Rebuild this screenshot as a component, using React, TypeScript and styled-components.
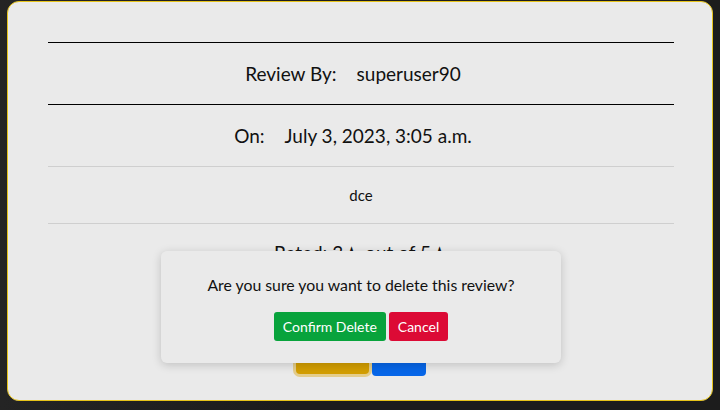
import styled, { createGlobalStyle } from 'styled-components';

const GlobalStyle = createGlobalStyle`
  html, body {
    margin: 0;
    padding: 0;
    background: #1e1e1e;
    font-family: Lato, 'Noto Sans', sans-serif;
  }
`;

const Page = styled.div`
  box-sizing: border-box;
  width: 720px;
  height: 410px;
  padding: 1px 7px 9px 7px;
  background: linear-gradient(90deg, #242424 0%, #1c1c1c 40%, #1c1c1c 100%);
`;

const Card = styled.div`
  position: relative;
  box-sizing: border-box;
  height: 400px;
  padding: 40px 38px 0 40px;
  background: #eaeaea;
  border: 1px solid #e6c31a;
  border-radius: 12px;
  display: flex;
  flex-direction: column;
  color: #111;
  overflow: hidden;
`;

const Divider = styled.div<{ $strong?: boolean }>`
  height: 1px;
  flex-shrink: 0;
  background: ${({ $strong }) => ($strong ? '#000' : '#cfcfcf')};
`;

const Row = styled.div<{ $height: number; $size: number; $offset?: number }>`
  box-sizing: border-box;
  height: ${({ $height }) => $height}px;
  flex-shrink: 0;
  display: flex;
  align-items: center;
  justify-content: center;
  gap: 20px;
  padding-right: ${({ $offset }) => $offset ?? 0}px;
  font-size: ${({ $size }) => $size}px;
`;

const Actions = styled.div`
  margin-top: 56px;
  flex-shrink: 0;
  display: flex;
  align-items: flex-start;
  justify-content: center;
  gap: 3px;
`;

const SmallButton = styled.button<{
  $bg: string;
  $width: number;
  $focused?: boolean;
}>`
  width: ${({ $width }) => $width}px;
  height: ${({ $focused }) => ($focused ? 38 : 40)}px;
  border: none;
  border-radius: 4px;
  background: ${({ $bg }) => $bg};
  color: #fff;
  font-family: inherit;
  font-size: 14px;
  box-shadow: ${({ $focused }) =>
    $focused ? '0 0 0 3px rgba(222, 180, 60, 0.55)' : 'none'};
`;

const Modal = styled.div`
  position: absolute;
  left: 153px;
  top: 249px;
  width: 400px;
  height: 112px;
  box-sizing: border-box;
  background: #eaeaea;
  border-radius: 6px;
  box-shadow: 0 2px 10px rgba(0, 0, 0, 0.18);
  display: flex;
  flex-direction: column;
  align-items: center;
  padding-top: 24px;
`;

const Question = styled.p`
  margin: 0;
  font-size: 15.8px;
  line-height: 20px;
  color: #111;
`;

const ModalButtons = styled.div`
  margin-top: 17px;
  display: flex;
  gap: 3px;
`;

const ModalButton = styled.button<{ $bg: string }>`
  height: 29px;
  padding: 0 9px;
  border: none;
  border-radius: 3px;
  background: ${({ $bg }) => $bg};
  color: #fff;
  font-family: inherit;
  font-size: 14px;
`;

export default function App() {
  return (
    <Page>
      <GlobalStyle />
      <Card>
        <Divider $strong />
        <Row $height={61} $size={19} $offset={16}>
          <span>Review By:</span>
          <span>superuser90</span>
        </Row>
        <Divider $strong />
        <Row $height={61} $size={19} $offset={16}>
          <span>On:</span>
          <span>July 3, 2023, 3:05 a.m.</span>
        </Row>
        <Divider />
        <Row $height={56} $size={15}>
          <span>dce</span>
        </Row>
        <Divider />
        <Row $height={56} $size={19}>
          <span>Rated: 3★ out of 5★</span>
        </Row>
        <Actions>
          <SmallButton $bg="#d39e00" $width={73} $focused>
            Edit
          </SmallButton>
          <SmallButton $bg="#0766e8" $width={54}>
            Delete
          </SmallButton>
        </Actions>
        <Modal>
          <Question>Are you sure you want to delete this review?</Question>
          <ModalButtons>
            <ModalButton $bg="#08a33c">Confirm Delete</ModalButton>
            <ModalButton $bg="#dc0a35">Cancel</ModalButton>
          </ModalButtons>
        </Modal>
      </Card>
    </Page>
  );
}
